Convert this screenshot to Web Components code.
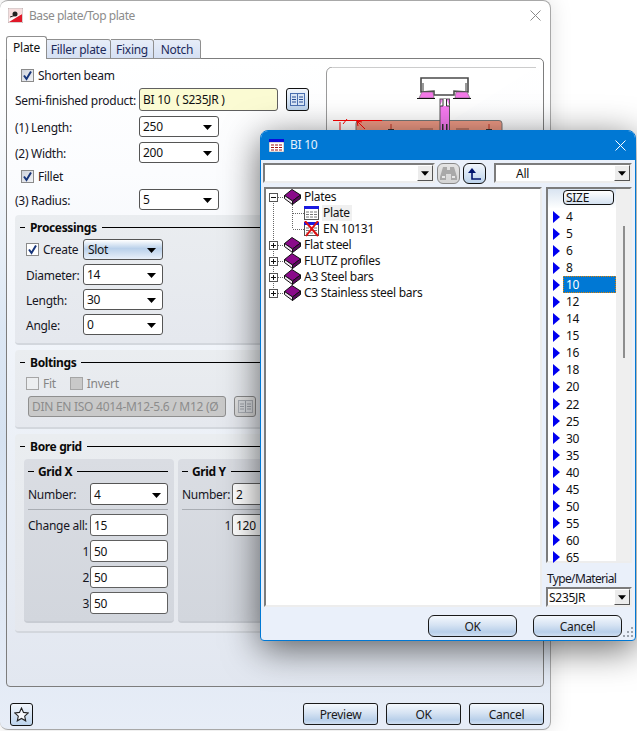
<!DOCTYPE html>
<html lang="en">
<head>
<meta charset="UTF-8">
<title>Base plate/Top plate</title>
<style>
  * { box-sizing: border-box; }
  html, body { margin: 0; height: 100%; }
  body {
    background: #fff;
    overflow: hidden;
    font: 12px/1.2 "Noto Sans", "Open Sans", sans-serif;
    letter-spacing: -.28px;
    color: #16161f;
  }
  .rows { display: grid; grid-template-columns: 124px 1fr; grid-template-rows: 22px 28px 26px 25px 22px 21px; align-items: start; }
  .span { grid-column: 1 / 3; padding-left: 6px; }
  .lbl { line-height: 21px; padding-top: 1px; white-space: nowrap; }
  .lbl.semi-lbl { padding-top: 2px; }
  .semi { display: flex; gap: 8px; }
</style>
</head>
<body>

<hs-window heading="Base plate/Top plate">
  <hs-tabs></hs-tabs>
  <hs-panel>
    <hs-top>
      <div class="rows">
        <div class="span"><hs-check checked>Shorten beam</hs-check></div>
        <div class="lbl semi-lbl">Semi-finished product:</div>
        <div class="semi"><hs-field tint width="139" height="23">BI 10 &nbsp;( S235JR )</hs-field><hs-tool icon="table" width="23" height="23"></hs-tool></div>
        <div class="lbl">(1) Length:</div><hs-combo value="250"></hs-combo>
        <div class="lbl">(2) Width:</div><hs-combo value="200"></hs-combo>
        <div class="span"><hs-check checked>Fillet</hs-check></div>
        <div class="lbl">(3) Radius:</div><hs-combo value="5"></hs-combo>
      </div>
    </hs-top>
    <hs-group heading="Processings" height="130" gap="3">
      <hs-form-grid>
        <hs-check checked white>Create</hs-check><hs-combo value="Slot" glossy></hs-combo>
        <span>Diameter:</span><hs-combo value="14"></hs-combo>
        <span>Length:</span><hs-combo value="30"></hs-combo>
        <span>Angle:</span><hs-combo value="0"></hs-combo>
      </hs-form-grid>
    </hs-group>
    <hs-group heading="Boltings" height="79" gap="2">
      <hs-bolting>
        <hs-check white off>Fit</hs-check>
        <hs-check filled off>Invert</hs-check>
        <hs-field slot="field" disabled width="198" height="21">DIN EN ISO 4014-M12-5.6 / M12 (Ø</hs-field>
        <hs-tool slot="tool" icon="table-off" width="22" height="21"></hs-tool>
      </hs-bolting>
    </hs-group>
    <hs-group heading="Bore grid" height="199" gap="4">
      <hs-grid-pair>
        <hs-group inner heading="Grid X" height="164" width="150" gap="3">
          <hs-grid-table>
            <span>Number:</span><hs-combo value="4" width="78" height="22"></hs-combo>
            <hs-rule></hs-rule>
            <span>Change all:</span><hs-field width="78" height="22">15</hs-field>
            <span class="r">1</span><hs-field width="78" height="22">50</hs-field>
            <span class="r">2</span><hs-field width="78" height="22">50</hs-field>
            <span class="r">3</span><hs-field width="78" height="22">50</hs-field>
          </hs-grid-table>
        </hs-group>
        <hs-group inner heading="Grid Y" height="164" width="210" gap="3">
          <hs-grid-table narrow>
            <span>Number:</span><hs-field width="78" height="22">2</hs-field>
            <hs-rule></hs-rule>
            <span class="r">1</span><hs-field width="78" height="22">120</hs-field>
          </hs-grid-table>
        </hs-group>
      </hs-grid-pair>
    </hs-group>
  </hs-panel>
  <hs-footer>
    <hs-tool icon="star" width="23" height="23"></hs-tool>
    <span style="flex:1"></span>
    <hs-button width="75" height="22">Preview</hs-button>
    <hs-button width="75" height="22">OK</hs-button>
    <hs-button width="75" height="22">Cancel</hs-button>
  </hs-footer>
</hs-window>

<hs-dialog heading="BI 10">
  <hs-sunken-combo slot="search" width="172"></hs-sunken-combo>
  <hs-tool slot="bino" icon="bino" width="23" height="21" round></hs-tool>
  <hs-tool slot="up" icon="up" width="23" height="21" round></hs-tool>
  <hs-sunken-combo slot="filter" width="138" indent="20">All</hs-sunken-combo>

  <hs-tree slot="tree">
    <hs-tree-row kind="open" icon="book">Plates</hs-tree-row>
    <hs-tree-row kind="child" icon="table" selected>Plate</hs-tree-row>
    <hs-tree-row kind="child-last" icon="table-x">EN 10131</hs-tree-row>
    <hs-tree-row kind="closed" icon="book">Flat steel</hs-tree-row>
    <hs-tree-row kind="closed" icon="book">FLUTZ profiles</hs-tree-row>
    <hs-tree-row kind="closed" icon="book">A3 Steel bars</hs-tree-row>
    <hs-tree-row kind="closed-last" icon="book">C3 Stainless steel bars</hs-tree-row>
  </hs-tree>

  <hs-size-list slot="list">
    <hs-size>4</hs-size><hs-size>5</hs-size><hs-size>6</hs-size><hs-size>8</hs-size>
    <hs-size selected>10</hs-size><hs-size>12</hs-size><hs-size>14</hs-size><hs-size>15</hs-size>
    <hs-size>16</hs-size><hs-size>18</hs-size><hs-size>20</hs-size><hs-size>22</hs-size>
    <hs-size>25</hs-size><hs-size>30</hs-size><hs-size>35</hs-size><hs-size>40</hs-size>
    <hs-size>45</hs-size><hs-size>50</hs-size><hs-size>55</hs-size><hs-size>60</hs-size>
    <hs-size>65</hs-size>
  </hs-size-list>
  <span slot="material">Type/Material</span>
  <hs-sunken-combo slot="material-combo" width="86">S235JR</hs-sunken-combo>

  <hs-button slot="ok" width="89" height="22" round>OK</hs-button>
  <hs-button slot="cancel" width="89" height="22" round>Cancel</hs-button>
</hs-dialog>

<script>
  const ARROW = `<svg width="9" height="5" viewBox="0 0 9 5"><path d="M0 0h9L4.500 5z" fill="#000"/></svg>`;

  const ICONS = {
    table: `<svg width="15" height="14" viewBox="0 0 15 14">
      <rect x=".5" y="2.500" width="14" height="11" fill="#fff" stroke="#555"/><rect width="15" height="3" fill="#1a1ae0"/>
      <path d="M2 6h3M6 6h3M10 6h3M2 8.500h3M6 8.500h3M10 8.500h3M2 11h3M6 11h3M10 11h3" stroke="#777" fill="none"/></svg>`,
    book: `<svg width="17" height="16" viewBox="0 0 17 16">
      <path d="M.5 6.500 8 .5l8.500 5.500-8 6z" fill="#8a0a8a" stroke="#111"/>
      <path d="M.5 6.500v3l8 6v-3.500z" fill="#f4e8f4" stroke="#111"/>
      <path d="M8.500 15.500l8-6V6l-8 6z" fill="#5c0860" stroke="#111"/></svg>`
  };
  ICONS['table-x'] = `<svg width="16" height="16" viewBox="0 0 16 16">
      <rect x=".5" y="3.500" width="14" height="11" fill="#fff" stroke="#555"/><rect y="1" width="15" height="3" fill="#1a1ae0"/>
      <path d="M2 7h3M6 7h3M10 7h3M2 9.500h3M6 9.500h3M10 9.500h3M2 12h3M6 12h3M10 12h3" stroke="#777" fill="none"/>
      <path d="M1 0l13 15M14 0L2 15" stroke="#e01010" stroke-width="2" fill="none"/></svg>`;

  class HsElement extends HTMLElement {
    constructor() {
      super();
      this.attachShadow({mode: "open"});
    }
    connectedCallback() {
      // outer rules don't reach the shadow root, so the box model is set here for all of them
      this.shadowRoot.innerHTML = `<style>* { box-sizing: border-box; }</style>` + this.render();
    }
    num(name, fallback) {
      return this.hasAttribute(name) ? Number(this.getAttribute(name)) : fallback;
    }
  }

  class HsWindow extends HsElement {
    render() {
      return `<style>
        :host {
          position: absolute; left: 0; top: 0; width: 551px; height: 730px;
          display: flex; flex-direction: column; padding: 0 6px;
          border: 1px solid #a8a8a8; border-left: 0; border-radius: 8px;
          background: linear-gradient(180deg, #fff 0, #fff 12%, #dce7f4 45%, #d6e2f1 60%, #e7edf7 100%);
          box-shadow: 0 0 22px rgba(0,0,0,.13);
        }
        header { height: 35px; display: flex; align-items: center; padding: 0 0 6px 2px; color: #8c8c8c; }
        header span { padding-top: 2px; letter-spacing: -.45px; }
        header svg.logo { margin-right: 6px; }
        header svg.close { margin-left: auto; margin-right: 3px; }
      </style>
      <header>
        <svg class="logo" width="15" height="15" viewBox="0 0 15 15">
          <rect width="15" height="15" fill="#fff" stroke="#b9a0a0"/><path d="M1 14 14 6v8z" fill="#e01828"/><path d="M1 1h13v5L1 11z" fill="#f6dede"/>
          <circle cx="7" cy="6" r="2.500" fill="#222"/><path d="M2 9l6-2" stroke="#222"/></svg>
        <span>${this.getAttribute('heading')}</span>
        <svg class="close" width="11" height="11" viewBox="0 0 11 11"><path d="M.5.500l10 10M10.500.500l-10 10" stroke="#8a8a8a" fill="none"/></svg>
      </header>
      <slot></slot>`;
    }
  }

  class HsTabs extends HsElement {
    render() {
      return `<style>
        :host { display: flex; height: 23px; align-items: flex-end; position: relative; z-index: 1; margin-bottom: -1px; flex: none; }
        .t { height: 20px; padding: 3px 0 0; text-align: center; border: 1px solid #8f8f8f; border-left: 0; border-radius: 0 3px 0 0; background: linear-gradient(#e7edf8, #d5e0f3); color: #1c2a5a; white-space: nowrap; }
        .on { height: 23px; width: 41px; padding: 4px 0 0; background: #fff; color: #111; border: 1px solid #8f8f8f; border-bottom: 0; border-radius: 3px 3px 0 0; }
        .a { width: 64px; } .b { width: 43px; } .c { width: 47px; }
      </style>
      <div class="t on">Plate</div><div class="t a">Filler plate</div><div class="t b">Fixing</div><div class="t c">Notch</div>`;
    }
  }

  class HsPanel extends HsElement {
    render() {
      return `<style>
        :host {
          display: flex; flex-direction: column; gap: 5px; height: 629px; flex: none; padding: 7px 6px 0 8px;
          border: 1px solid #7d7d7d; border-radius: 0 5px 4px 4px;
          background: linear-gradient(180deg, #fff 0, #fbfcfe 18%, #eff3f9 50%, #e2e7f0 100%);
        }
      </style><slot></slot>`;
    }
  }

  class HsTop extends HsElement {
    render() {
      return `<style>
        :host { display: flex; height: 144px; flex: none; justify-content: space-between; }
        .preview { width: 210px; height: 144px; margin-right: 1px; margin-top: 1px; overflow: hidden; }
      </style>
      <div style="width:300px"><slot></slot></div>
      <div class="preview">
        <svg width="210" height="144" viewBox="327 67 210 144">
          <path d="M327.500 200V73a6 6 0 0 1 6-6H537" fill="#fff" stroke="#9a9a9a"/>
          <rect x="357" y="120.500" width="146" height="30" rx="3" fill="#ef9a85" stroke="#777"/>
          <path d="M422 78h47v14l-14-1v4h-20v-4l-13 1z" fill="#fff" stroke="#4a4a4a" stroke-width="1.600"/>
          <path d="M424 83v8M467 83v8" stroke="#999" stroke-width="2"/>
          <path d="M420 98l3-6h11l1 6zM471 98l-3-6h-11l-1 6z" fill="#f478e8" stroke="#666" stroke-width=".6"/>
          <path d="M418 98.500h18M454 98.500h18" stroke="#111" stroke-width="1.200"/>
          <rect x="441" y="99" width="9.500" height="36" fill="#f67af0" stroke="#555"/>
          <path d="M444 99h3.500v7H444z" fill="#fff"/>
          <path d="M441 106h3v-7M450.500 106h-3v-7" fill="#fff" stroke="#333"/>
          <path d="M443 124h1.500v6H443zM447 124h1.500v6H447z" fill="#333"/>
          <path d="M421 129h13M457 129h13" stroke="#c07868" stroke-width="2"/>
          <path d="M392 124v6M490 124v6" stroke="#c03020" stroke-width="1"/>
          <path d="M389 130h6M487 130h6" stroke="#333" stroke-width="2"/>
          <path d="M334 120.500h49M344 124l4-5M341 122v8" stroke="#f00" fill="none"/>
          <path d="M358 121l8 8M358 121l1 5M358 121l5 1" stroke="#f00" fill="none"/>
        </svg>
      </div>`;
    }
  }

  class HsGroup extends HsElement {
    render() {
      const inner = this.hasAttribute('inner');
      const w = this.hasAttribute('width') ? `width:${this.getAttribute('width')}px;` : '';
      return `<style>
        :host {
          display: block; flex: none; ${w} height: ${this.getAttribute('height')}px; padding-top: 4px;
          border-radius: 4px; border-bottom: 2px solid ${inner ? '#c8ccd3' : '#d3d7dd'};
          background: ${inner ? 'linear-gradient(#dadde3, #d2d6dd)' : 'linear-gradient(#eaedf0, #e5e8ee)'};
        }
        .head { display: flex; align-items: center; height: 17px; padding: 0 ${inner ? 6 : 0}px 0 ${inner ? 4 : 5}px; font-weight: 700; letter-spacing: -.35px; color: #0a0a0a; }
        .title { padding-top: 2px; }
        .dash { width: ${inner ? 6 : 5}px; height: 1px; background: #000; margin-right: ${inner ? 4 : 5}px; }
        .line { flex: 1; height: 1px; background: #000; margin-left: 5px; }
        .body { margin-top: ${this.getAttribute('gap')}px; }
      </style>
      <div class="head"><span class="dash"></span><span class="title">${this.getAttribute('heading')}</span><span class="line"></span></div>
      <div class="body"><slot></slot></div>`;
    }
  }

  class HsFormGrid extends HsElement {
    render() {
      return `<style>
        :host { display: grid; grid-template-columns: 57px 80px; grid-auto-rows: 21px; row-gap: 4px; padding-left: 11px; align-items: center; }
        ::slotted(span) { padding-top: 3px; }
      </style><slot></slot>`;
    }
  }

  class HsBolting extends HsElement {
    render() {
      return `<style>
        :host { display: block; padding-left: 11px; }
        .checks { display: flex; gap: 14px; height: 20px; align-items: center; }
        .field { display: flex; gap: 8px; margin: 3px 0 0 2px; }
      </style>
      <div class="checks"><slot></slot></div>
      <div class="field"><slot name="field"></slot><slot name="tool"></slot></div>`;
    }
  }

  class HsGridPair extends HsElement {
    render() {
      return `<style>:host { display: flex; gap: 4px; padding-left: 9px; }</style><slot></slot>`;
    }
  }

  class HsGridTable extends HsElement {
    render() {
      const c = this.hasAttribute('narrow') ? 50 : 62;
      return `<style>
        :host { display: grid; grid-template-columns: ${c}px 78px; grid-template-rows: 22px 1px; grid-auto-rows: 22px; row-gap: 4px; padding-left: 4px; align-items: center; }
        ::slotted(span) { padding-top: 2px; }
        ::slotted(.r) { text-align: right; padding-right: 1px; }
        ::slotted(hs-rule) { grid-column: 1 / 3; }
      </style><slot></slot>`;
    }
  }

  class HsRule extends HsElement {
    render() {
      return `<style>:host { display: block; height: 1px; background: #a9adb3; }</style>`;
    }
  }

  class HsFooter extends HsElement {
    render() {
      return `<style>:host { display: flex; gap: 8px; margin-top: 16px; padding: 0 0 0 4px; flex: none; }</style><slot></slot>`;
    }
  }

  class HsCheck extends HsElement {
    render() {
      const on = this.hasAttribute('checked');
      const off = this.hasAttribute('off');
      const bg = this.hasAttribute('filled') ? '#c9c9c9' : this.hasAttribute('white') ? '#fff' : 'linear-gradient(135deg, #cfd3dc, #f2f3f6)';
      return `<style>
        :host { display: inline-flex; align-items: center; gap: 4px; height: 19px; color: ${off ? '#858585' : 'inherit'}; white-space: nowrap; }
        .box { width: 13px; height: 13px; border: 1px solid ${off ? '#a5a5a5' : '#8a8a8a'}; background: ${off && !this.hasAttribute('filled') ? '#eceef0' : bg}; display: block; flex: none; }
        .lab { padding-top: 2px; }
        svg { display: block; }
      </style>
      <span class="box">${on ? `<svg width="11" height="11" viewBox="0 0 11 11"><path d="M2 5.500l2.500 3.500L9 1.500" fill="none" stroke="#17357a" stroke-width="2"/></svg>` : ''}</span><span class="lab"><slot></slot></span>`;
    }
  }

  class HsCombo extends HsElement {
    render() {
      const w = this.num('width', 80), h = this.num('height', 21);
      const glossy = this.hasAttribute('glossy');
      const bg = glossy ? 'linear-gradient(#fff 0, #b9d0ea 45%, #e9f0f9 100%)' : '#fff';
      return `<style>
        :host { display: flex; align-items: center; justify-content: space-between; width: ${w}px; height: ${h}px; padding: 2px 6px 0 ${glossy ? 4 : 3}px; border: 1px solid #555; border-radius: 3px; background: ${bg}; color: #111; }
        svg { display: block; }
      </style><span>${this.getAttribute('value')}</span>${ARROW}`;
    }
  }

  class HsField extends HsElement {
    render() {
      const off = this.hasAttribute('disabled');
      const bg = off ? '#c9c9c9' : this.hasAttribute('tint') ? '#fbfbd3' : '#fff';
      return `<style>
        :host { display: flex; align-items: center; width: ${this.getAttribute('width')}px; height: ${this.getAttribute('height')}px; padding: 2px 3px 0; border: 1px solid ${off ? '#8f8f8f' : '#606060'}; border-radius: 3px; background: ${bg}; color: ${off ? '#8c8c8c' : '#111'}; white-space: nowrap; overflow: hidden; }
      </style><slot></slot>`;
    }
  }

  class HsButton extends HsElement {
    render() {
      return `<style>
        :host { display: flex; align-items: center; justify-content: center; flex: none; width: ${this.getAttribute('width')}px; height: ${this.getAttribute('height')}px; padding-top: 2px; border: 1px solid #1a1a1a; border-radius: ${this.hasAttribute('round') ? 6 : 3}px; background: linear-gradient(#f4f8fd 0, #d6e3f3 45%, #b8cfe9 80%, #cfdef0 100%); color: #1a1a1a; }
      </style><slot></slot>`;
    }
  }

  class HsTool extends HsElement {
    render() {
      const name = this.getAttribute('icon');
      const art = {
        table: `<svg width="15" height="13" viewBox="0 0 15 13"><rect x=".5" y=".5" width="14" height="12" fill="#d9e6f7" stroke="#4a6fb0"/><path d="M7.500 1v11" stroke="#4a6fb0"/><path d="M2 4h4M2 6.500h4M2 9h4M9 4h4M9 6.500h4M9 9h4" stroke="#264c94"/></svg>`,
        'table-off': `<svg width="15" height="13" viewBox="0 0 15 13"><rect x=".5" y=".5" width="14" height="12" fill="#d5d8dc" stroke="#a9adb3"/><path d="M7.500 1v11M2 4h4M2 6.500h4M2 9h4M9 4h4M9 6.500h4M9 9h4" stroke="#9a9ea5"/></svg>`,
        star: `<svg width="15" height="15" viewBox="0 0 15 15"><path d="M7.500 1l2 4.400 4.800.500-3.600 3.200 1 4.700-4.200-2.400-4.200 2.400 1-4.700L.7 5.900l4.800-.5z" fill="#f6f8fc" stroke="#222" stroke-width="1.100"/></svg>`,
        bino: `<svg width="17" height="15" viewBox="0 0 17 15"><path d="M3 1h4v3h3V1h4l3 10v3h-6V8H6v6H0v-3z" fill="#a9a9a9"/><path d="M2 11h3M12 11h3" stroke="#e8e8e8" stroke-width="2"/></svg>`,
        up: `<svg width="15" height="14" viewBox="0 0 15 14"><path d="M5 1 1 6h8z" fill="#00146e"/><path d="M5 5v7h9" fill="none" stroke="#00146e" stroke-width="1.600"/></svg>`
      }[name];
      const quiet = name === 'bino' || name === 'table-off';
      return `<style>
        :host { display: flex; align-items: center; justify-content: center; flex: none; width: ${this.getAttribute('width')}px; height: ${this.getAttribute('height')}px; border: 1px solid ${quiet ? '#8a8a8a' : '#111'}; border-radius: ${this.hasAttribute('round') ? 6 : 3}px; background: ${quiet ? 'linear-gradient(#e4e4e4, #d4d4d4)' : 'linear-gradient(#f2f6fc, #bcd3ec)'}; }
        svg { display: block; }
      </style>${art}`;
    }
  }

  class HsSunkenCombo extends HsElement {
    render() {
      return `<style>
        :host { display: flex; flex: none; height: 20px; width: ${this.getAttribute('width')}px; border: 2px solid; border-color: #7c7c7c #ededed #ededed #7c7c7c; background: #fff; color: #111; }
        .text { flex: 1; line-height: 18px; padding-left: ${this.num('indent', 1)}px; white-space: nowrap; overflow: hidden; }
        .btn { width: 16px; height: 16px; background: #ececec; border: 1px solid; border-color: #fff #555 #555 #fff; display: flex; align-items: center; justify-content: center; }
        svg { display: block; width: 8px; }
      </style><span class="text"><slot></slot></span><span class="btn">${ARROW}</span>`;
    }
  }

  class HsDialog extends HsElement {
    render() {
      return `<style>
        :host {
          position: absolute; left: 260px; top: 130px; width: 376px; height: 511px;
          border: 1px solid #0078d4; border-radius: 8px 8px 4px 4px; background: #eaf0fa;
          box-shadow: 0 8px 36px rgba(0,0,0,.6);
          display: flex; flex-direction: column;
        }
        header { height: 29px; display: flex; align-items: center; padding: 0 9px 0 8px; background: #0078d4; color: #e6f2fb; border-radius: 7px 7px 0 0; }
        header .ico { margin-right: 6px; display: block; }
        header .x { margin-left: auto; display: block; }
        .bar { display: flex; margin: 3px 0 0 2px; height: 21px; }
        .main { display: flex; gap: 4px; margin: 3px 0 0 3px; height: 420px; }
        .side { display: flex; flex-direction: column; width: 86px; }
        .mat { height: 25px; padding-top: 9px; padding-left: 1px; white-space: nowrap; letter-spacing: -.65px; }
        .foot { display: flex; justify-content: flex-end; gap: 16px; padding: 8px 13px 0 0; }
        .grip { position: absolute; right: 1px; bottom: 1px; display: block; }
        ::slotted([slot=bino]) { margin-left: 2px; }
        ::slotted([slot=up]) { margin-left: 3px; }
        ::slotted([slot=filter]) { margin-left: 8px; }
      </style>
      <header>
        <svg class="ico" width="15" height="13" viewBox="0 0 15 13"><rect y="3" width="15" height="10" fill="#fff" stroke="#666" stroke-width=".5"/><rect width="15" height="3" fill="#0b0bdc"/>
          <path d="M2 6h3M6 6h3M10 6h3M2 8.500h3M6 8.500h3M10 8.500h3M2 11h3M6 11h3M10 11h3" stroke="#a01414" stroke-width="1.200"/></svg>
        <span>${this.getAttribute('heading')}</span>
        <svg class="x" width="11" height="11" viewBox="0 0 11 11"><path d="M.5.500l10 10M10.500.500l-10 10" stroke="#fff" fill="none"/></svg>
      </header>
      <div class="bar"><slot name="search"></slot><slot name="bino"></slot><slot name="up"></slot><slot name="filter"></slot></div>
      <div class="main">
        <slot name="tree"></slot>
        <div class="side"><slot name="list"></slot><div class="mat"><slot name="material"></slot></div><slot name="material-combo"></slot></div>
      </div>
      <div class="foot"><slot name="ok"></slot><slot name="cancel"></slot></div>
      <svg class="grip" width="12" height="12" viewBox="0 0 12 12"><path d="M9 0h2v2H9zM5 4h2v2H5zM9 4h2v2H9zM1 8h2v2H1zM5 8h2v2H5zM9 8h2v2H9z" fill="#9ba3ad"/></svg>`;
    }
  }

  class HsTree extends HsElement {
    render() {
      return `<style>
        :host { display: block; width: 278px; height: 420px; padding-top: 0; border: 2px solid; border-color: #7c7c7c #ededed #ededed #7c7c7c; background: #fff; color: #111; }
      </style><slot></slot>`;
    }
  }

  class HsTreeRow extends HsElement {
    render() {
      const kind = this.getAttribute('kind');
      const child = kind.startsWith('child');
      const dots = 'stroke="#666" stroke-dasharray="1 1" fill="none"';
      // connector lines are drawn per row so the tree stays in normal flow
      let lines;
      if (child) {
        lines = `<path d="M7.500 0V16" ${dots}/><path d="M26.500 0V${kind === 'child' ? 16 : 8}M27 8.500H38" ${dots}/>`;
      } else {
        const last = kind.endsWith('last');
        const box = `<rect x="3.500" y="4.500" width="8" height="8" fill="#fff" stroke="#555"/><path d="M5 8.500h5${kind.startsWith('closed') ? 'M7.500 6v5' : ''}" stroke="#111"/>`;
        lines = `<path d="M7.500 ${kind === 'open' ? 8 : 0}V${last ? 8 : 16}M12 8.500H18" ${dots}/>${box}`;
      }
      const sel = this.hasAttribute('selected');
      return `<style>
        :host { display: flex; align-items: center; height: 16px; white-space: nowrap; }
        svg { display: block; flex: none; }
        .ind { width: ${child ? 38 : 18}px; }
        .ic { width: ${child ? 18 : 19}px; flex: none; }
        .t { padding: 0 2px 0 1px; line-height: 16px; background: ${sel ? '#f0f0f0' : 'none'}; }
      </style>
      <svg class="ind" width="${child ? 38 : 18}" height="16">${lines}</svg>
      <span class="ic">${ICONS[this.getAttribute('icon')]}</span><span class="t"><slot></slot></span>`;
    }
  }

  class HsSizeList extends HsElement {
    render() {
      return `<style>
        :host { display: block; position: relative; width: 86px; height: 376px; flex: none; border: 2px solid; border-color: #7c7c7c #ededed #ededed #7c7c7c; background: #fff; color: #111; }
        .wrap { display: flex; height: 100%; }
        .col { width: 68px; flex: none; }
        .head { height: 19px; background: linear-gradient(#d9e4f1, #fdfefe); padding: 1px 0 0 15px; }
        .btn { width: 51px; height: 15px; border: 1px solid #111; border-radius: 4px; background: linear-gradient(#fff, #d5e2f1); padding-left: 2px; line-height: 14px; }
        .track { flex: 1; background: #efefef; position: relative; }
        .thumb { position: absolute; left: 7px; top: 37px; width: 2px; height: 132px; background: #8e8e8e; }
      </style>
      <div class="wrap">
        <div class="col"><div class="head"><div class="btn">SIZE</div></div><slot></slot></div>
        <div class="track"><div class="thumb"></div></div>
      </div>`;
    }
  }

  class HsSize extends HsElement {
    render() {
      const sel = this.hasAttribute('selected');
      return `<style>
        :host { display: flex; align-items: center; height: 17.05px; padding-left: 5px; }
        svg { display: block; flex: none; margin-right: 3px; }
        .t { flex: 1; height: 17px; line-height: 17px; padding-left: 3px; ${sel ? 'background:#0078d4;color:#fff;outline:1px dotted #e08000;outline-offset:-1px;' : ''} }
      </style>
      <svg width="7" height="12" viewBox="0 0 7 12"><path d="M0 0l7 6-7 6z" fill="#0000f0"/></svg><span class="t"><slot></slot></span>`;
    }
  }

  const elements = {
    'hs-window': HsWindow, 'hs-tabs': HsTabs, 'hs-panel': HsPanel, 'hs-top': HsTop,
    'hs-group': HsGroup, 'hs-form-grid': HsFormGrid, 'hs-bolting': HsBolting,
    'hs-grid-pair': HsGridPair, 'hs-grid-table': HsGridTable, 'hs-rule': HsRule,
    'hs-footer': HsFooter, 'hs-check': HsCheck, 'hs-combo': HsCombo, 'hs-field': HsField,
    'hs-button': HsButton, 'hs-tool': HsTool, 'hs-sunken-combo': HsSunkenCombo,
    'hs-dialog': HsDialog, 'hs-tree': HsTree, 'hs-tree-row': HsTreeRow,
    'hs-size-list': HsSizeList, 'hs-size': HsSize
  };
  for (const name in elements) customElements.define(name, elements[name]);
</script>
</body>
</html>
